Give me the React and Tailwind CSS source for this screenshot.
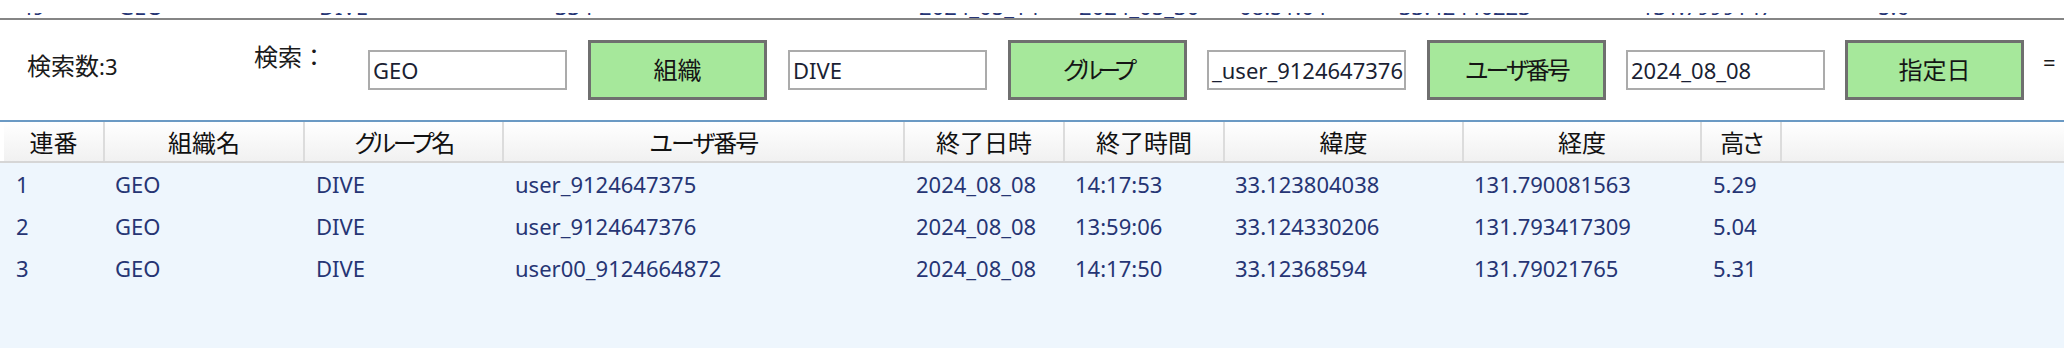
import React from "react";

const topRow = [
  { text: "49", w: "w-[98px]" },
  { text: "GEO", w: "w-[201px]" },
  { text: "DIVE", w: "w-[236px]" },
  { text: "334", w: "w-[364px]" },
  { text: "2024_05_14", w: "w-[160px]" },
  { text: "2024_05_30", w: "w-[160px]" },
  { text: "08:51:04", w: "w-[160px]" },
  { text: "33.42440223", w: "w-[242px]" },
  { text: "131.7999147", w: "w-[237px]" },
  { text: "5.6", w: "w-[80px]" },
];

const columns = [
  { label: "連番", w: "w-[101px]", pl: "pl-[12px]", tr: "" },
  { label: "組織名", w: "w-[200px]", pl: "pl-[10px]", tr: "" },
  { label: "グループ名", w: "w-[199px]", pl: "pl-[11px]", tr: "tracking-[-3px]" },
  { label: "ユーザ番号", w: "w-[401px]", pl: "pl-[11px]", tr: "tracking-[-2px]" },
  { label: "終了日時", w: "w-[160px]", pl: "pl-[11px]", tr: "" },
  { label: "終了時間", w: "w-[160px]", pl: "pl-[10px]", tr: "" },
  { label: "緯度", w: "w-[239px]", pl: "pl-[10px]", tr: "" },
  { label: "経度", w: "w-[238px]", pl: "pl-[10px]", tr: "" },
  { label: "高さ", w: "w-[80px]", pl: "pl-[11px]", tr: "tracking-[-2px]" },
];

const rows = [
  ["1", "GEO", "DIVE", "user_9124647375", "2024_08_08", "14:17:53", "33.123804038", "131.790081563", "5.29"],
  ["2", "GEO", "DIVE", "user_9124647376", "2024_08_08", "13:59:06", "33.124330206", "131.793417309", "5.04"],
  ["3", "GEO", "DIVE", "user00_9124664872", "2024_08_08", "14:17:50", "33.12368594", "131.79021765", "5.31"],
];

function TextBox({ value }) {
  return (
    <div className="w-[199px] h-[40px] border-2 border-[#ababab] bg-white flex items-center pl-[3px] overflow-hidden whitespace-nowrap text-[22px] text-[#1b1f33]">
      {value}
    </div>
  );
}

function GreenButton({ label, tr = "" }) {
  return (
    <button
      className={`w-[179px] h-[60px] border-[3px] border-[#6f6f6f] bg-[#a6e89b] flex items-center justify-center text-[24px] text-[#151515] [font-feature-settings:'palt'] ${tr}`}
    >
      {label}
    </button>
  );
}

export default function App() {
  return (
    <div className="w-[2064px] h-[348px] overflow-hidden bg-white font-['Noto_Sans','Noto_Sans_CJK_JP',sans-serif] flex flex-col">
      {/* previous row, scrolled almost out of view */}
      <div className="h-[13px] shrink-0" />
      <div className="h-[5px] overflow-hidden shrink-0">
        <div className="flex pl-[20px] -mt-[22px] leading-[30px] text-[22px] text-[#263574] whitespace-nowrap">
          {topRow.map((c, i) => (
            <div key={i} className={c.w}>
              {c.text}
            </div>
          ))}
        </div>
      </div>
      <div className="h-[2px] bg-[#858585] shrink-0" />

      {/* search bar */}
      <div className="h-[100px] shrink-0 flex items-center pl-[27px] whitespace-nowrap text-[#1a1a1a]">
        <div className="w-[227px] mb-[8px] flex items-baseline">
          <span className="text-[24px]">検索数</span>
          <span className="text-[22px]">:3</span>
        </div>
        <div className="w-[114px] mb-[26px] text-[24px]">検索：</div>
        <TextBox value="GEO" />
        <div className="ml-[21px]">
          <GreenButton label="組織" />
        </div>
        <div className="ml-[21px]">
          <TextBox value="DIVE" />
        </div>
        <div className="ml-[21px]">
          <GreenButton label="グループ" tr="tracking-[-5px]" />
        </div>
        <div className="ml-[20px]">
          <TextBox value="_user_9124647376" />
        </div>
        <div className="ml-[21px]">
          <GreenButton label="ユーザ番号" tr="tracking-[-3px]" />
        </div>
        <div className="ml-[20px]">
          <TextBox value="2024_08_08" />
        </div>
        <div className="ml-[20px]">
          <GreenButton label="指定日" />
        </div>
        <div className="ml-[19px] mb-[16px] text-[22px]">=</div>
      </div>

      {/* grid */}
      <div className="h-[2px] bg-[#6b9ac4] shrink-0" />
      <div className="flex-1 bg-[#eef6fd] flex flex-col">
        <div className="h-[41px] flex pl-[4px] bg-white border-b-2 border-[#d6d6d6] text-[24px] text-[#111] [font-feature-settings:'palt']">
          {columns.map((c, i) => (
            <div
              key={i}
              className={`${c.w} ${c.tr} pt-[3px] flex items-center justify-center border-r-2 border-[#dcdcdc] bg-gradient-to-b from-white to-[#f1f1f1]`}
            >
              {c.label}
            </div>
          ))}
          <div className="flex-1 pt-[3px] bg-gradient-to-b from-white to-[#f1f1f1]" />
        </div>
        <div className="pl-[4px] text-[22px] text-[#263574]">
          {rows.map((r, ri) => (
            <div key={ri} className="h-[42px] flex items-center whitespace-nowrap">
              {r.map((v, ci) => (
                <div key={ci} className={`${columns[ci].w} ${columns[ci].pl}`}>
                  {v}
                </div>
              ))}
            </div>
          ))}
        </div>
      </div>
    </div>
  );
}
